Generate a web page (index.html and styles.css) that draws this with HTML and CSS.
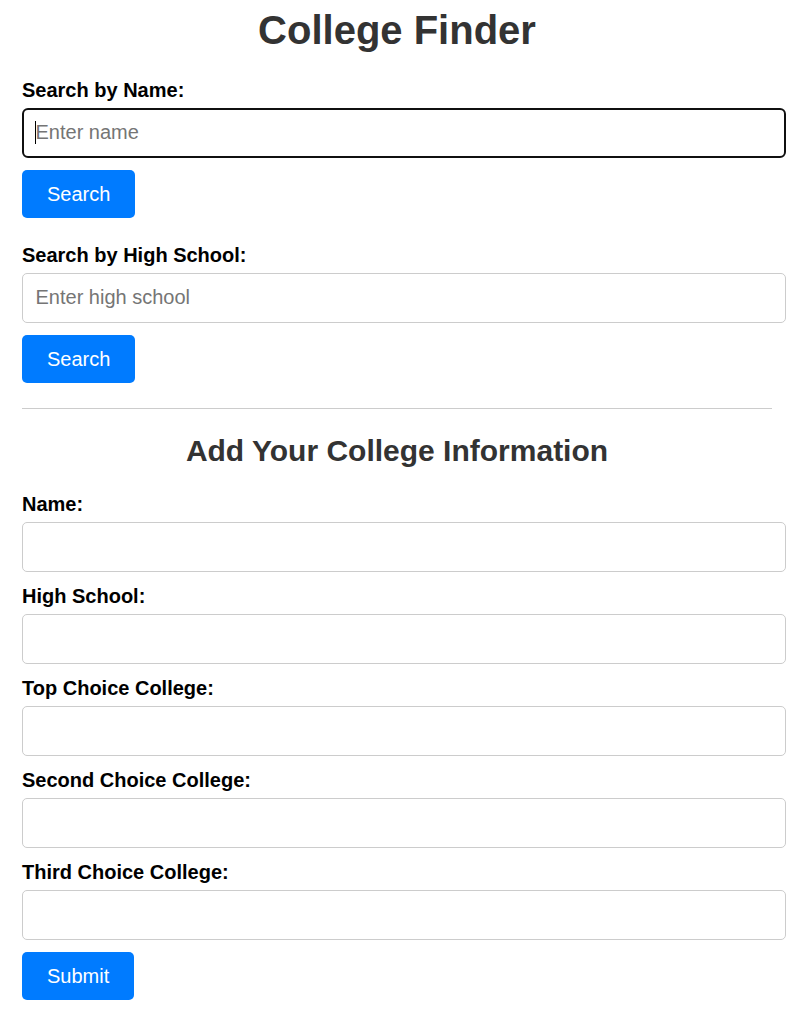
FILE: index.html
```html
<!DOCTYPE html>
<html lang="en">
<head>
<meta charset="utf-8">
<title>College Finder</title>
<link rel="stylesheet" href="styles.css">
</head>
<body>
<div class="page">
  <h1 class="title">College Finder</h1>

  <div class="section">
    <label class="label" for="searchName">Search by Name:</label>
    <div class="field-wrap">
      <input class="input input-focused" id="searchName" type="text" placeholder="Enter name">
      <span class="caret"></span>
    </div>
    <button class="btn" type="button">Search</button>
  </div>

  <div class="section">
    <label class="label" for="searchSchool">Search by High School:</label>
    <input class="input" id="searchSchool" type="text" placeholder="Enter high school">
    <button class="btn" type="button">Search</button>
  </div>

  <hr class="divider">

  <h2 class="subtitle">Add Your College Information</h2>

  <form class="form">
    <label class="label" for="name">Name:</label>
    <input class="input" id="name" type="text">
    <label class="label" for="hs">High School:</label>
    <input class="input" id="hs" type="text">
    <label class="label" for="c1">Top Choice College:</label>
    <input class="input" id="c1" type="text">
    <label class="label" for="c2">Second Choice College:</label>
    <input class="input" id="c2" type="text">
    <label class="label" for="c3">Third Choice College:</label>
    <input class="input" id="c3" type="text">
    <button class="btn" type="button">Submit</button>
  </form>
</div>
</body>
</html>
```

FILE: styles.css
```css
html, body {
  margin: 0;
  padding: 0;
  background: #ffffff;
}

body {
  font-family: "Liberation Sans", Arial, sans-serif;
  color: #000;
}

.page {
  width: 764px;
  margin-left: 22px;
  display: flex;
  flex-direction: column;
  align-items: stretch;
}

.title {
  width: 750px;
  margin: 7px 0 25px;
  font-size: 40px;
  line-height: 46px;
  font-weight: bold;
  color: #333;
  text-align: center;
}

.section {
  display: flex;
  flex-direction: column;
  align-items: flex-start;
  margin-bottom: 25px;
}

.form {
  display: flex;
  flex-direction: column;
  align-items: flex-start;
  margin: 0;
}

.label {
  display: block;
  font-size: 20px;
  line-height: 23px;
  font-weight: bold;
  padding-top: 1px;
  margin-bottom: 6px;
  color: #000;
}

.field-wrap {
  position: relative;
  width: 100%;
}

.input {
  display: block;
  box-sizing: border-box;
  width: 100%;
  height: 50px;
  margin: 0 0 12px;
  padding: 0 12.5px 1px;
  border: 1px solid #cccccc;
  border-radius: 5px;
  font-family: "Liberation Sans", Arial, sans-serif;
  font-size: 20px;
  color: #000;
  background: #fff;
  outline: none;
}

.input::placeholder {
  color: #757575;
}

.input-focused {
  border: 2px solid #101010;
  padding-left: 11.5px;
  border-radius: 6px;
}

.caret {
  position: absolute;
  left: 13px;
  top: 13px;
  width: 1px;
  height: 23px;
  background: #000;
}

.btn {
  display: inline-block;
  box-sizing: border-box;
  height: 48px;
  padding: 0 25px;
  border: none;
  border-radius: 5px;
  background: #007bff;
  color: #fff;
  font-family: "Liberation Sans", Arial, sans-serif;
  font-size: 20px;
  line-height: 23px;
  cursor: pointer;
}

.divider {
  width: 750px;
  margin: 0 0 25px;
  border: 0;
  height: 1px;
  background: #cccccc;
}

.subtitle {
  width: 750px;
  margin: 0 0 23.5px;
  font-size: 30px;
  line-height: 34.5px;
  font-weight: bold;
  color: #333;
  text-align: center;
}
```
